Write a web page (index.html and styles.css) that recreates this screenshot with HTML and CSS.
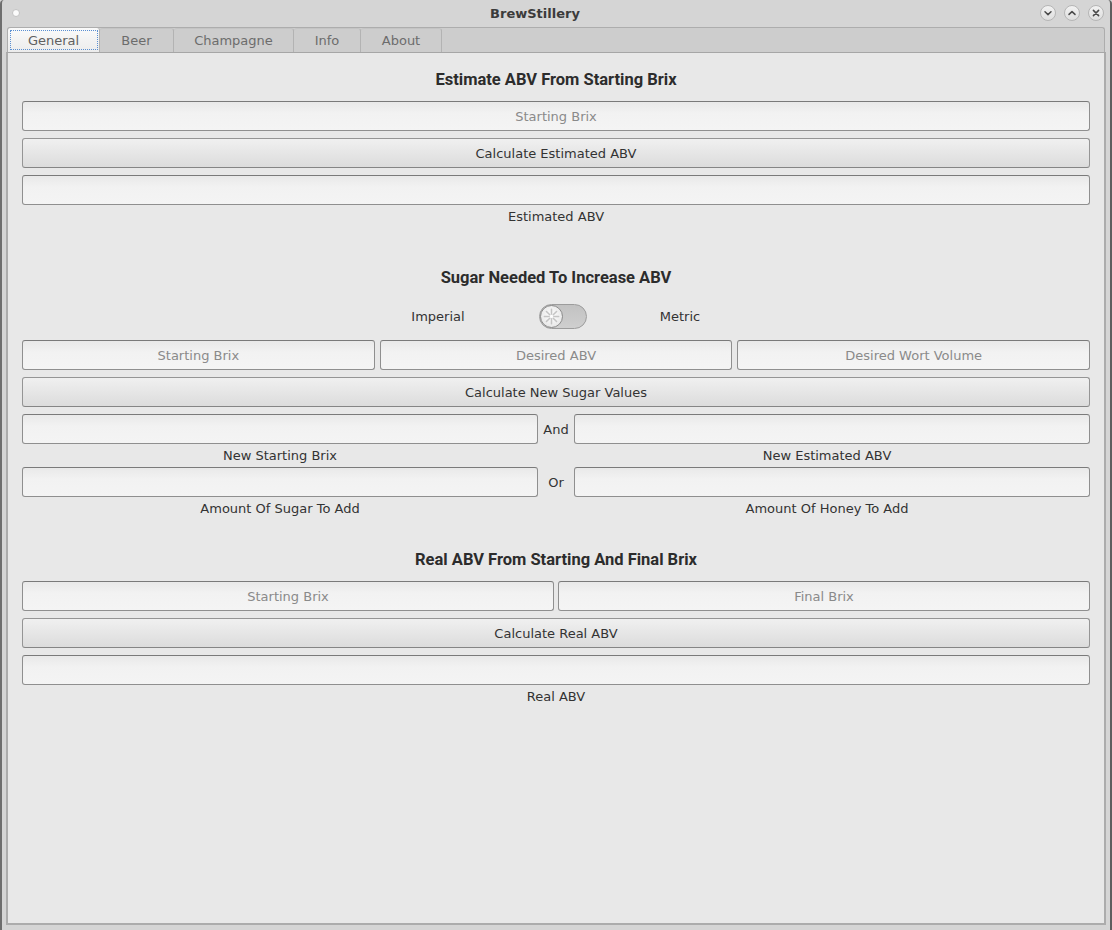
FILE: index.html
```html
<!DOCTYPE html>
<html lang="en">
<head>
<meta charset="utf-8">
<title>BrewStillery</title>
<link rel="stylesheet" href="styles.css">
</head>
<body>
<div class="window">
  <header class="titlebar">
    <span class="menu-dot"></span>
    <span class="title">BrewStillery</span>
    <div class="wm-buttons">
      <span class="wm-btn"><svg viewBox="0 0 16 16" width="16" height="16"><path d="M5 6.8 L8 9.6 L11 6.8" /></svg></span>
      <span class="wm-btn"><svg viewBox="0 0 16 16" width="16" height="16"><path d="M5 9.4 L8 6.6 L11 9.4" /></svg></span>
      <span class="wm-btn"><svg viewBox="0 0 16 16" width="16" height="16"><path d="M5.4 5.4 L10.6 10.6 M10.6 5.4 L5.4 10.6" /></svg></span>
    </div>
  </header>
  <div class="frame">
    <nav class="tabs">
      <div class="tab active">General</div>
      <div class="tab t-beer">Beer</div>
      <div class="tab t-champagne">Champagne</div>
      <div class="tab t-info">Info</div>
      <div class="tab t-about">About</div>
    </nav>
    <main class="pane">
      <section class="section">
        <h2 class="heading">Estimate ABV From Starting Brix</h2>
        <div class="stack">
          <input class="field" type="text" placeholder="Starting Brix">
          <button class="btn" type="button">Calculate Estimated ABV</button>
          <input class="field" type="text">
          <div class="caption">Estimated ABV</div>
        </div>
      </section>

      <section class="section s2">
        <h2 class="heading">Sugar Needed To Increase ABV</h2>
        <div class="switch-row">
          <span class="switch-label imperial">Imperial</span>
          <span class="switch">
            <span class="knob">
              <svg viewBox="0 0 22 22" width="22" height="22">
                <g class="spokes">
                  <path d="M11 3.5 V8.5 M11 13.5 V18.5 M3.5 11 H8.5 M13.5 11 H18.5 M5.7 5.7 L9.2 9.2 M12.8 12.8 L16.3 16.3 M16.3 5.7 L12.8 9.2 M9.2 12.8 L5.7 16.3" />
                </g>
              </svg>
            </span>
          </span>
          <span class="switch-label metric">Metric</span>
        </div>
        <div class="stack">
          <div class="row3">
            <input class="field" type="text" placeholder="Starting Brix">
            <input class="field" type="text" placeholder="Desired ABV">
            <input class="field" type="text" placeholder="Desired Wort Volume">
          </div>
          <button class="btn" type="button">Calculate New Sugar Values</button>
          <div class="pair">
            <input class="field" type="text">
            <span class="joiner">And</span>
            <input class="field" type="text">
          </div>
          <div class="pair caption">
            <span>New Starting Brix</span>
            <span></span>
            <span class="right-cap">New Estimated ABV</span>
          </div>
          <div class="pair">
            <input class="field" type="text">
            <span class="joiner">Or</span>
            <input class="field" type="text">
          </div>
          <div class="pair caption">
            <span>Amount Of Sugar To Add</span>
            <span></span>
            <span class="right-cap">Amount Of Honey To Add</span>
          </div>
        </div>
      </section>

      <section class="section s3">
        <h2 class="heading">Real ABV From Starting And Final Brix</h2>
        <div class="stack">
          <div class="row2">
            <input class="field" type="text" placeholder="Starting Brix">
            <input class="field" type="text" placeholder="Final Brix">
          </div>
          <button class="btn" type="button">Calculate Real ABV</button>
          <input class="field" type="text">
          <div class="caption">Real ABV</div>
        </div>
      </section>
    </main>
  </div>
</div>
</body>
</html>
```

FILE: styles.css
```css
* { box-sizing: border-box; }

html, body {
  margin: 0;
  padding: 0;
}

body {
  width: 1112px;
  height: 930px;
  overflow: hidden;
  font-family: "DejaVu Sans", "Liberation Sans", sans-serif;
  font-size: 13px;
  color: #333333;
  background: #d5d5d5;
}

.window {
  width: 1112px;
  height: 930px;
  display: flex;
  flex-direction: column;
  background: #d5d5d5;
  border-left: 2px solid #6e6e6e;
  border-right: 2px solid #5e5e5e;
  border-radius: 4px 4px 0 0;
}

/* ---------- title bar ---------- */
.titlebar {
  height: 27px;
  flex: 0 0 27px;
  display: flex;
  align-items: center;
  padding: 0 6px 1px 10px;
}

.menu-dot {
  width: 8px;
  height: 8px;
  border-radius: 50%;
  background: #fbfbfb;
  border: 1px solid #c2c2c2;
  margin-right: 10px;
  flex: 0 0 auto;
}

.title {
  flex: 1;
  text-align: center;
  font-weight: bold;
  font-size: 13px;
  color: #3b3b3b;
}

.wm-buttons {
  display: flex;
  gap: 8px;
}

.wm-btn {
  width: 16px;
  height: 16px;
  border-radius: 50%;
  border: 1px solid #b5b5b5;
  background: linear-gradient(#f2f2f2, #dedede);
  display: flex;
  align-items: center;
  justify-content: center;
}

.wm-btn svg {
  width: 16px;
  height: 16px;
  flex: 0 0 16px;
}

.wm-btn path {
  fill: none;
  stroke: #4a4a4a;
  stroke-width: 1.5;
  stroke-linecap: round;
  stroke-linejoin: round;
}

/* ---------- frame / tabs ---------- */
.frame {
  flex: 1;
  display: flex;
  flex-direction: column;
  padding: 0 4px 5px 4px;
}

.tabs {
  height: 25px;
  flex: 0 0 25px;
  margin: 0 1px;
  display: flex;
  background: #cdcdcd;
  border: 1px solid #adadad;
  border-bottom: none;
  border-radius: 3px 3px 0 0;
}

.tab {
  display: flex;
  align-items: center;
  justify-content: center;
  color: #6c6c6c;
  border-right: 1px solid #b3b3b3;
  border-top: 1px solid #c4c4c4;
  border-radius: 3px 3px 0 0;
}

.t-beer { width: 74px; }
.t-champagne { width: 120px; }
.t-info { width: 67px; }
.t-about { width: 81px; }

.tab.active {
  width: 92px;
  border-top: none;
  background: linear-gradient(#fafafa, #ececec);
  color: #606060;
  outline: 1px dotted #5a8fd2;
  outline-offset: -3px;
}

.pane {
  flex: 1;
  background: #e8e8e8;
  border: 2px solid #acacac;
  border-top: 1px solid #a6a6a6;
  padding: 15px 14px 16px 14px;
}

/* ---------- sections ---------- */
.heading {
  margin: 0 0 9px 0;
  height: 24px;
  line-height: 24px;
  text-align: center;
  font-family: Roboto, "DejaVu Sans", sans-serif;
  font-weight: bold;
  font-size: 16.5px;
  color: #2c2c2c;
}

.s2 { margin-top: 41px; }
.s3 { margin-top: 31px; }

.stack {
  display: flex;
  flex-direction: column;
}

.pane .stack > * + * { margin-top: 7px; }
.pane .stack > .caption,
.pane .stack > .caption + * { margin-top: 3px; }

.field {
  display: block;
  width: 100%;
  height: 30px;
  border: 1px solid #8f8f8f;
  border-top-color: #7a7a7a;
  border-radius: 3px;
  background: linear-gradient(#e9e9e9 0%, #f2f2f2 40%, #f4f4f4 100%);
  font-family: "DejaVu Sans", sans-serif;
  font-size: 13px;
  color: #333;
  text-align: center;
  padding: 0 6px;
  outline: none;
}

.field::placeholder {
  color: #8a8a8a;
  opacity: 1;
}

.btn {
  display: block;
  width: 100%;
  height: 30px;
  border: 1px solid #959595;
  border-bottom-color: #858585;
  border-radius: 3px;
  background: linear-gradient(#f0f0f0, #e6e6e6 50%, #dcdcdc);
  font-family: "DejaVu Sans", sans-serif;
  font-size: 13px;
  color: #333;
  padding: 0;
}

.caption {
  line-height: 17px;
  height: 17px;
  text-align: center;
  color: #333;
}

/* ---------- switch row ---------- */
.switch-row {
  height: 26px;
  margin: 13px 0 11px 0;
  display: flex;
  align-items: center;
  justify-content: center;
  padding-left: 6px;
}

.switch-label {
  width: 100px;
  text-align: center;
  color: #333;
}

.imperial { margin-right: 51px; }
.metric { margin-left: 43px; }

.switch {
  width: 48px;
  height: 25px;
  border-radius: 13px;
  border: 1px solid #9c9c9c;
  background: linear-gradient(#c2c2c2, #cfcfcf);
  display: flex;
  align-items: center;
}

.knob {
  width: 23px;
  height: 23px;
  border-radius: 50%;
  border: 1px solid #8c8c8c;
  background: radial-gradient(circle at 50% 45%, #ffffff, #ececec 60%, #dcdcdc);
  display: flex;
  align-items: center;
  justify-content: center;
}

.knob svg {
  width: 21px;
  height: 21px;
}

.spokes path {
  fill: none;
  stroke: #c4c4c4;
  stroke-width: 1.6;
  stroke-linecap: round;
}

/* ---------- rows ---------- */
.row3 {
  display: grid;
  grid-template-columns: 1fr 1fr 1fr;
  gap: 5px;
}

.row2 {
  display: grid;
  grid-template-columns: 1fr 1fr;
  gap: 4px;
}

.pair {
  display: grid;
  grid-template-columns: 1fr 36px 1fr;
  align-items: center;
}

.joiner {
  text-align: center;
  color: #333;
}

.pair.caption {
  text-align: center;
}

.right-cap {
  padding-right: 10px;
}
```
